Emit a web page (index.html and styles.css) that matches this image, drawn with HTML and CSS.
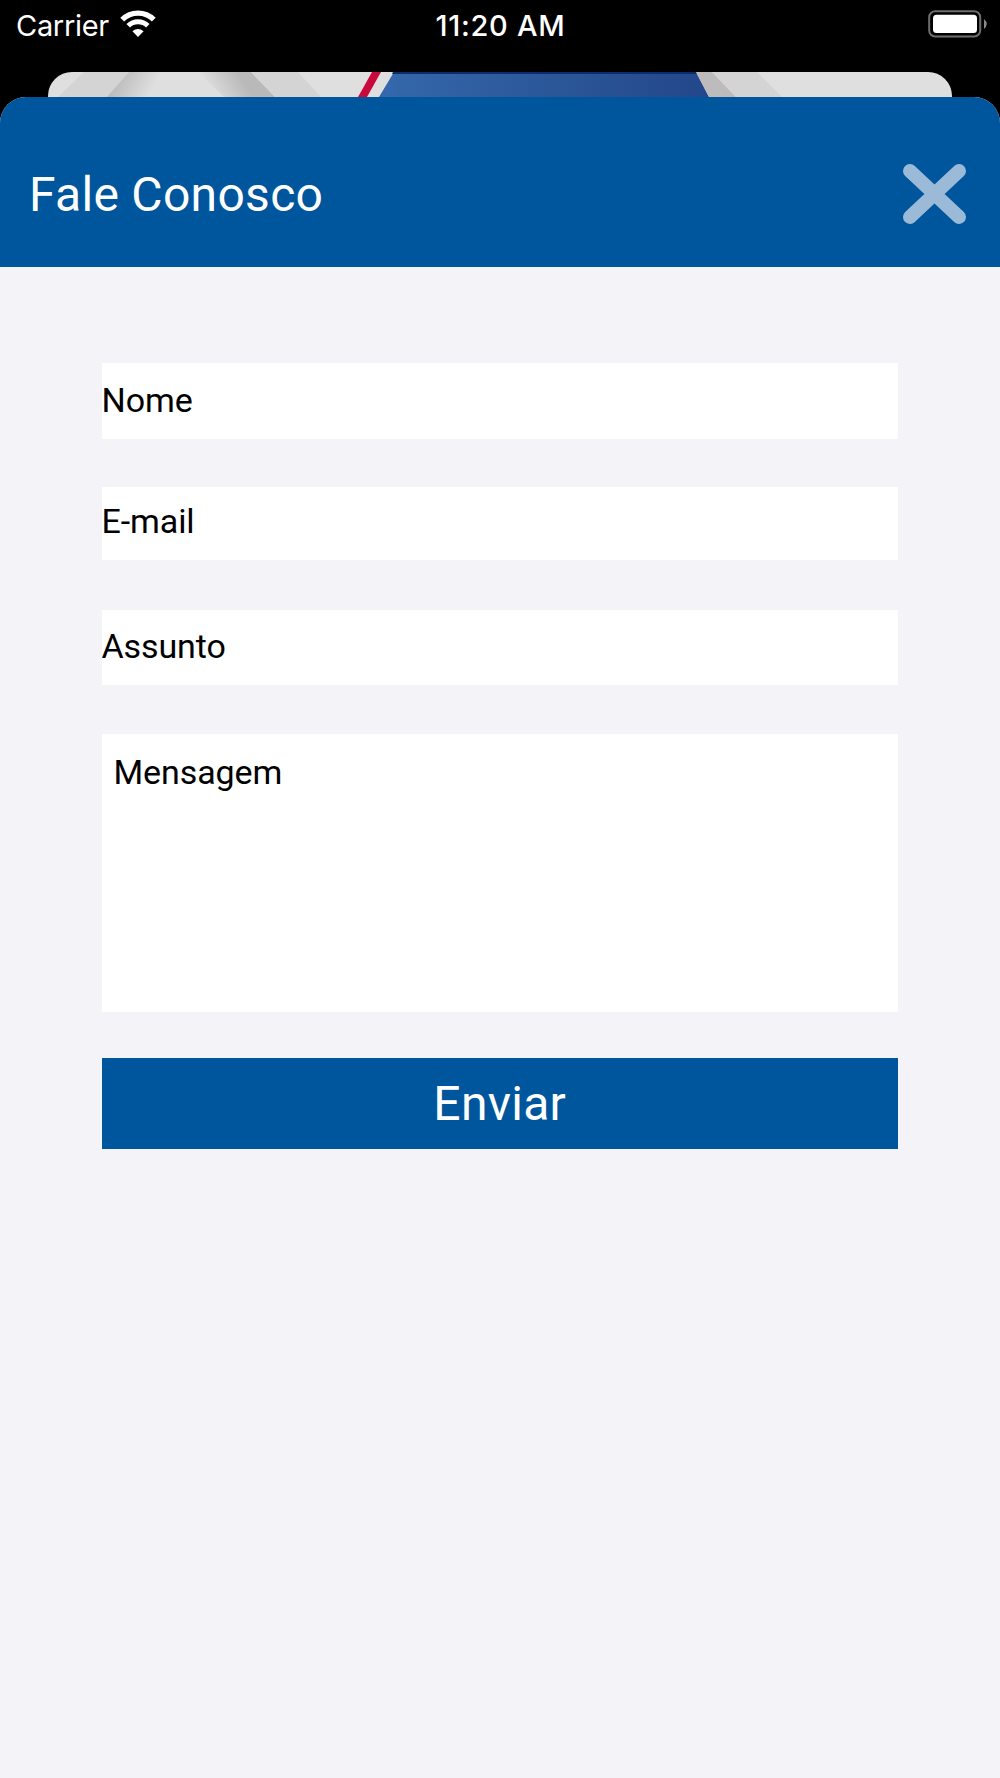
FILE: index.html
```html
<!DOCTYPE html>
<html lang="pt-BR">
<head>
    <meta charset="UTF-8">
    <meta name="viewport" content="width=device-width, initial-scale=1.0">
    <title>Fale Conosco</title>
    <link rel="stylesheet" href="styles.css">
</head>
<body>
    <div class="status-bar">
        <div class="status-left">
            <span class="carrier">Carrier</span>
            <svg class="wifi" width="38" height="28" viewBox="0 0 38 28">
                <path d="M3.2 9.6A22.5 22.5 0 0 1 34.8 9.6" fill="none" stroke="#fff" stroke-width="5.4"/>
                <path d="M9.2 15.7A14 14 0 0 1 28.8 15.7" fill="none" stroke="#fff" stroke-width="5"/>
                <path d="M13.4 21.2Q19 16.6 24.6 21.2L19 27Z" fill="#fff"/>
            </svg>
        </div>
        <span class="time">11:20 AM</span>
        <div class="status-right">
            <svg width="60" height="28" viewBox="0 0 60 28">
                <rect x="1.2" y="1.2" width="51" height="25.3" rx="6" fill="none" stroke="#6e6e6e" stroke-width="2"/>
                <rect x="5" y="4.7" width="44" height="18.3" rx="3.5" fill="#fff"/>
                <path d="M56 9Q61.5 14 56 19Z" fill="#8a8a8a"/>
            </svg>
        </div>
    </div>

    <!-- Tela anterior, atrás do modal -->
    <div class="back-card">
        <svg width="904" height="48" viewBox="0 0 904 48">
            <defs>
                <linearGradient id="shadeLeft" x1="70" y1="0" x2="104" y2="18" gradientUnits="userSpaceOnUse">
                    <stop offset="0" stop-color="#b9b9b9"/>
                    <stop offset="1" stop-color="#dfdfdf"/>
                </linearGradient>
                <linearGradient id="shadeRight" x1="160" y1="18" x2="190" y2="0" gradientUnits="userSpaceOnUse">
                    <stop offset="0" stop-color="#dfdfdf"/>
                    <stop offset="1" stop-color="#b9b9b9"/>
                </linearGradient>
                <linearGradient id="banner" x1="340" y1="0" x2="660" y2="0" gradientUnits="userSpaceOnUse">
                    <stop offset="0" stop-color="#3467ab"/>
                    <stop offset="0.5" stop-color="#2b5799"/>
                    <stop offset="1" stop-color="#23478a"/>
                </linearGradient>
            </defs>
            <path d="M36 0H81L60 25H10Z" fill="#d4d4d4"/>
            <path d="M81 0H125L100 25H59Z" fill="url(#shadeLeft)"/>
            <path d="M150 0H203L227 25H176Z" fill="url(#shadeRight)"/>
            <path d="M203 0H250L273 25H227Z" fill="#d4d4d4"/>
            <path d="M324 0H333L319 25H310Z" fill="#c8093b"/>
            <path d="M346 0H648L661 25H331Z" fill="url(#banner)"/>
            <path d="M345 0H648L649 2H344Z" fill="#0b2d6d"/>
            <path d="M648 0H664L688 25H661Z" fill="#bdbbbc"/>
            <path d="M664 0H709L734 25H688Z" fill="#d4d4d4"/>
        </svg>
    </div>

    <div class="modal">
        <div class="header">
            <h1>Fale Conosco</h1>
            <button class="close" type="button" aria-label="Fechar">
                <svg width="63" height="60" viewBox="0 0 63 60">
                    <path d="M7 7L56 53M56 7L7 53" fill="none" stroke="#9bbad8" stroke-width="14" stroke-linecap="round"/>
                </svg>
            </button>
        </div>

        <form class="contact-form">
            <input class="field name" type="text" placeholder="Nome">
            <input class="field email" type="email" placeholder="E-mail">
            <input class="field subject" type="text" placeholder="Assunto">
            <textarea class="field message" placeholder="Mensagem"></textarea>
            <button class="send" type="button">Enviar</button>
        </form>
    </div>
</body>
</html>
```
FILE: styles.css
```css
* {
    box-sizing: border-box;
}

body {
    margin: 0;
    height: 1778px;
    display: flex;
    flex-direction: column;
    background: #000;
    font-family: Roboto, sans-serif;
    overflow: hidden;
}

.status-bar {
    display: grid;
    grid-template-columns: 1fr auto 1fr;
    height: 72px;
    padding: 0 12px 0 16px;
    color: #fff;
    font-family: Inter, sans-serif;
    font-size: 29px;
    line-height: 51px;
}

.status-left {
    display: flex;
    align-items: flex-start;
    gap: 10px;
}

.carrier {
    letter-spacing: -0.3px;
}

.wifi {
    margin-top: 10px;
}

.time {
    margin-left: -3px;
    font-weight: 500;
    letter-spacing: 0.7px;
}

.status-right {
    display: flex;
    justify-content: flex-end;
    padding-top: 10px;
}

.back-card {
    height: 49px;
    margin: 0 48px -24px;
    flex-shrink: 0;
    border-radius: 24px 24px 0 0;
    background: #dfdfdf;
    overflow: hidden;
}

.modal {
    position: relative;
    flex: 1;
    border-radius: 26px 26px 0 0;
    background: #f3f3f8;
    overflow: hidden;
}

.header {
    display: flex;
    align-items: center;
    justify-content: space-between;
    height: 170px;
    padding: 24px 34px 0 29px;
    background: #00569d;
}

h1 {
    margin: 0;
    color: #fff;
    font-size: 48px;
    font-weight: 400;
    letter-spacing: 0.3px;
}

.close {
    display: flex;
    padding: 0;
    border: none;
    background: none;
    cursor: pointer;
}

.contact-form {
    display: flex;
    flex-direction: column;
    padding: 96px 102px 0 101.5px;
}

.field {
    width: 100%;
    margin: 0;
    padding: 0 0 3px;
    border: none;
    border-radius: 0;
    outline: none;
    background: #fff;
    color: #000;
    font-family: inherit;
    font-size: 34px;
    letter-spacing: -0.1px;
    resize: none;
}

.field::placeholder {
    color: #000;
    opacity: 1;
}

.name {
    height: 76px;
    margin-bottom: 48px;
}

.email {
    height: 73px;
    margin-bottom: 50px;
    padding-bottom: 6px;
}

.subject {
    height: 75px;
    margin-bottom: 49px;
}

.message {
    height: 278px;
    margin-bottom: 46px;
    padding: 18px 12px;
}

.send {
    height: 91px;
    padding: 0;
    border: none;
    background: #00569d;
    color: #fff;
    font-family: inherit;
    font-size: 48px;
    letter-spacing: 0.3px;
    cursor: pointer;
}
```
